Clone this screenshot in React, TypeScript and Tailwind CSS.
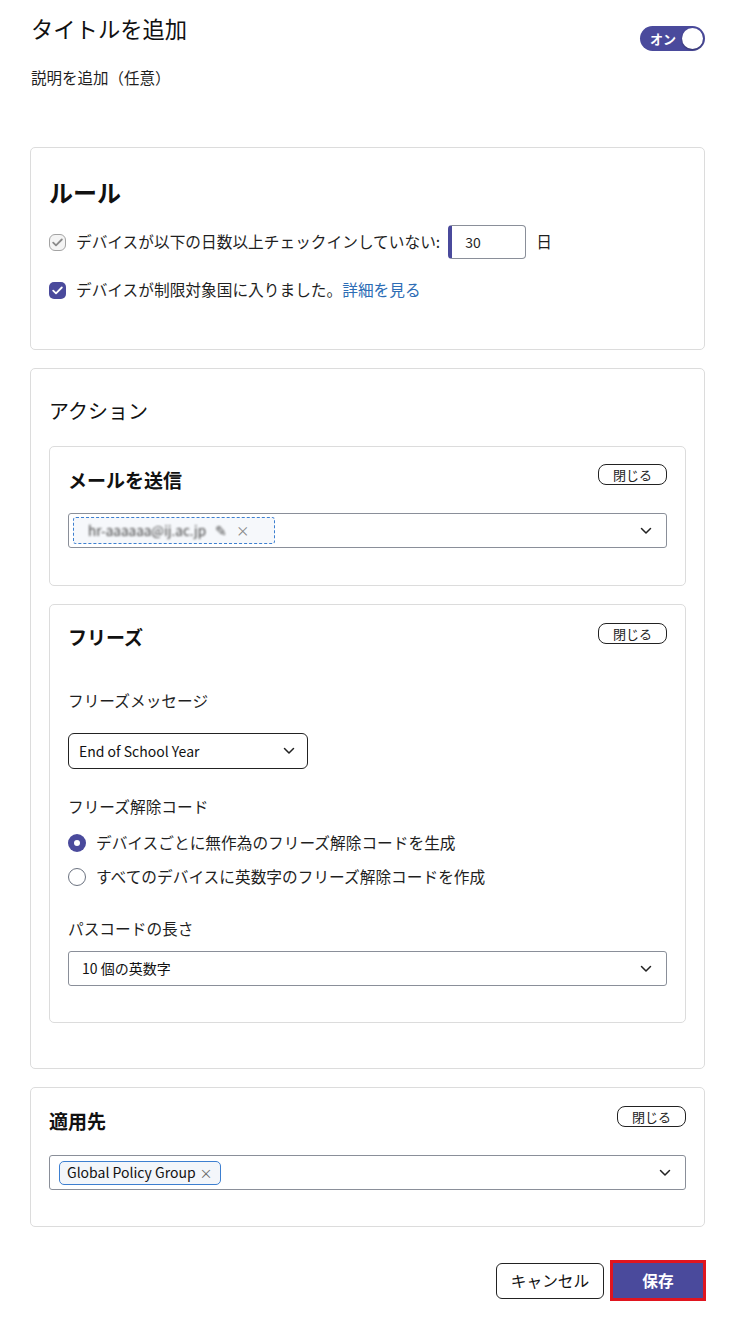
import { ReactNode } from "react";

const purple = "bg-[#4a4a9c]";

function Chevron() {
  return (
    <svg width="12" height="8" viewBox="0 0 12 8" fill="none" className="shrink-0">
      <path d="M1.5 1.5 6 6l4.5-4.5" stroke="#222" strokeWidth="1.5" strokeLinecap="round" strokeLinejoin="round" />
    </svg>
  );
}

function CloseButton() {
  return (
    <button className="flex h-[21px] w-[69px] items-center justify-center rounded-[8px] border border-[#222] bg-white text-[13px] leading-none text-[#222]">
      閉じる
    </button>
  );
}

function Check({ color }: { color: string }) {
  return (
    <svg width="11" height="9" viewBox="0 0 11 9" fill="none">
      <path d="M1.2 4.6 4 7.3 9.8 1.5" stroke={color} strokeWidth="1.8" strokeLinecap="round" strokeLinejoin="round" />
    </svg>
  );
}

function Radio({ checked, label }: { checked?: boolean; label: string }) {
  return (
    <label className="flex h-6 items-center gap-[10px] text-[15.7px] text-[#1f1f1f]">
      {checked ? (
        <span className={`flex h-[18px] w-[18px] items-center justify-center rounded-full ${purple}`}>
          <span className="h-[6px] w-[6px] rounded-full bg-white" />
        </span>
      ) : (
        <span className="h-[18px] w-[18px] rounded-full border border-[#6b7280] bg-white" />
      )}
      {label}
    </label>
  );
}

function Card({ children, className = "" }: { children: ReactNode; className?: string }) {
  return <div className={`rounded-[5px] border border-[#dcdcdc] bg-white ${className}`}>{children}</div>;
}

function CardHeader({ title, offset = "mt-[2px]" }: { title: string; offset?: string }) {
  return (
    <div className="flex h-[29px] items-start justify-between">
      <h3 className={`${offset} text-[19px] font-bold leading-[26px] text-[#111]`}>{title}</h3>
      <CloseButton />
    </div>
  );
}

export default function App() {
  return (
    <div
      className="min-h-[1336px] w-[735px] bg-white px-[30px] pt-[13px] text-[#1f1f1f]"
      style={{ fontFamily: '"Noto Sans CJK JP", "Noto Sans", sans-serif' }}
    >
      <div className="flex items-start justify-between">
        <div>
          <h1 className="pl-px text-[22.3px] leading-[30px] text-[#111]">タイトルを追加</h1>
          <p className="mt-[23px] pl-px text-[15.5px] leading-[22px]">説明を追加（任意）</p>
        </div>
        <div className={`mt-[13px] flex h-[25px] w-[65px] items-center justify-between rounded-full pl-[10px] pr-[2px] ${purple}`}>
          <span className="text-[13px] font-bold text-white">オン</span>
          <span className="h-[21px] w-[21px] rounded-full bg-white shadow-[0_1px_2px_rgba(0,0,0,0.35)]" />
        </div>
      </div>

      {/* ルール */}
      <Card className="mt-[59px] px-[18px] pb-[47px] pt-[28px]">
        <h2 className="text-[24px] font-bold leading-[32px] text-[#111]">ルール</h2>
        <div className="mt-[17px] flex h-[34px] items-center text-[15.7px]">
          <span className="flex h-[17px] w-[17px] items-center justify-center rounded-[6px] border border-[#a3a3a3] bg-[#f4f4f4]">
            <Check color="#8a8a8a" />
          </span>
          <span className="ml-[10px]">デバイスが以下の日数以上チェックインしていない:</span>
          <div className="ml-[8px] flex h-[34px] w-[78px] items-center rounded-[4px] border border-l-4 border-[#8a8f99] border-l-[#4a4a9c] pl-[13px] text-[14px]">
            30
          </div>
          <span className="ml-[10px]">日</span>
        </div>
        <div className="mt-[19px] flex h-6 items-center text-[15.7px]">
          <span className={`flex h-[17px] w-[17px] items-center justify-center rounded-[5px] ${purple}`}>
            <Check color="#fff" />
          </span>
          <span className="ml-[10px]">デバイスが制限対象国に入りました。</span>
          <a className="text-[#2d6db5]">詳細を見る</a>
        </div>
      </Card>

      {/* アクション */}
      <Card className="mt-[18px] px-[18px] pb-[45px] pt-[28px]">
        <h2 className="text-[20px] leading-[28px] text-[#111]">アクション</h2>

        <Card className="mt-[21px] px-[18px] pb-[37px] pt-[17px]">
          <CardHeader title="メールを送信" offset="mt-[3px]" />
          <div className="mt-[20px] flex h-[35px] items-center justify-between rounded-[3px] border border-[#8a8f99] pl-[4px] pr-[14px]">
            <div className="flex h-[27px] w-[202px] items-center gap-[9px] rounded-[3px] border border-dashed border-[#3d7fd0] bg-[#f6f8fb] px-[14px] text-[13.5px] text-[#444]">
              <span className="blur-[1.1px]">hr-aaaaaa@ij.ac.jp</span>
              <span className="blur-[0.8px]">✎</span>
              <span className="text-[#888]">×</span>
            </div>
            <Chevron />
          </div>
        </Card>

        <Card className="mt-[18px] px-[18px] pb-[36px] pt-[18px]">
          <CardHeader title="フリーズ" offset="mt-[1px]" />
          <p className="mt-[37px] text-[15.7px] leading-[24px]">フリーズメッセージ</p>
          <div className="mt-[20px] flex h-[36px] w-[240px] items-center justify-between rounded-[6px] border border-[#222] pl-[10px] pr-[12px] text-[14px] text-[#111]">
            End of School Year
            <Chevron />
          </div>
          <p className="mt-[26px] text-[15.7px] leading-[24px]">フリーズ解除コード</p>
          <div className="mt-[12px] flex flex-col gap-[10px]">
            <Radio checked label="デバイスごとに無作為のフリーズ解除コードを生成" />
            <Radio label="すべてのデバイスに英数字のフリーズ解除コードを作成" />
          </div>
          <p className="mt-[28px] text-[15.7px] leading-[24px]">パスコードの長さ</p>
          <div className="mt-[10px] flex h-[35px] items-center justify-between rounded-[3px] border border-[#8a8f99] pl-[13px] pr-[14px] text-[14px] text-[#111]">
            10 個の英数字
            <Chevron />
          </div>
        </Card>
      </Card>

      {/* 適用先 */}
      <Card className="mt-[18px] px-[18px] pb-[36px] pt-[18px]">
        <CardHeader title="適用先" />
        <div className="mt-[20px] flex h-[35px] items-center justify-between rounded-[3px] border border-[#8a8f99] pl-[9px] pr-[14px]">
          <div className="flex h-[24px] items-center gap-[4px] rounded-[5px] border border-[#3d7fd0] bg-[#f3f6fa] px-[7px] text-[14px] text-[#111]">
            Global Policy Group
            <span className="text-[13px] text-[#666]">×</span>
          </div>
          <Chevron />
        </div>
      </Card>

      <div className="mt-[33px] flex items-center justify-end gap-[6px]">
        <button className="flex h-[36px] w-[108px] items-center justify-center rounded-[6px] border border-[#222] bg-white text-[15.7px] text-[#111]">
          キャンセル
        </button>
        <button className={`-mr-px flex h-[41px] w-[96px] items-center justify-center border-[3px] border-[#e0151f] text-[15.7px] font-bold text-white ${purple}`}>
          保存
        </button>
      </div>
    </div>
  );
}
